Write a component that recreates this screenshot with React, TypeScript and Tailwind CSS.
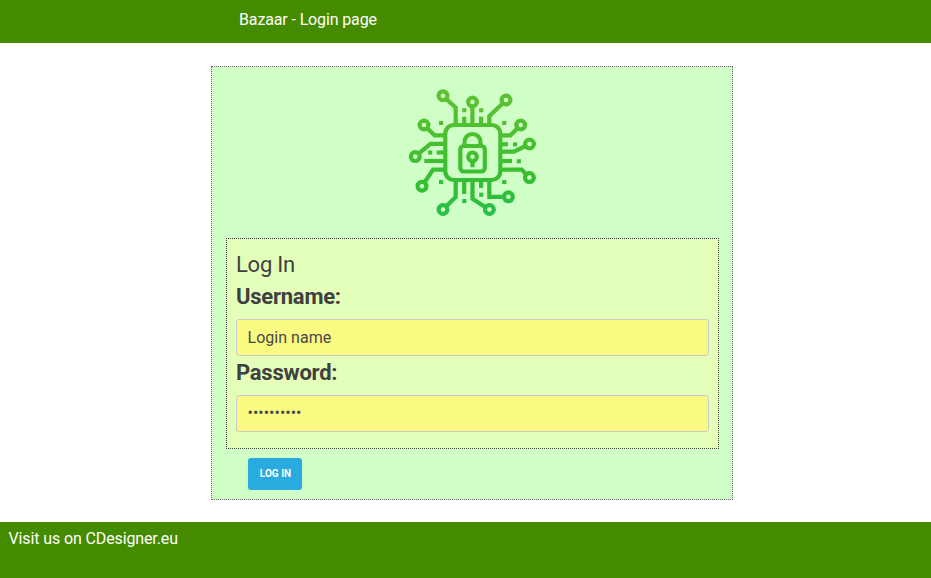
const nodes: [number, number][] = [
  [443, 95.7], [472.5, 102], [506, 100], [424, 125], [520.7, 125], [529.5, 144],
  [415.3, 156.6], [422, 186.2], [443, 209.5], [489.4, 209.5], [508.4, 196.8], [529.4, 177.6],
];

const dots: [number, number][] = [
  [462.3, 108.2], [479.2, 108.2], [439, 120.9], [502.2, 120.9], [513, 142.3], [428.2, 150.5],
  [516.8, 159.2], [439, 180], [502.2, 180], [462.3, 199], [479.2, 192.7],
];

const traces = [
  'M446.2 98.9L455.7 107.6V124',
  'M472.4 106V124',
  'M502.8 103.2L489.3 116.2V124',
  'M427.2 128.2L434.6 135.3H445',
  'M517.5 128.2L510.5 135.3H500',
  'M525.6 146L514 151.6H500',
  'M418.6 153.6L430.5 143.8H445',
  'M424.3 161H445',
  'M424.5 182.5L433 169.7H445',
  'M446.2 206.3L455.7 197V181',
  'M485.6 207.2L472.5 198.8V181',
  'M504 196.8H489.3V181',
  'M526.2 174.4L521.8 169.7H500',
  'M436.7 152.5H445',
  'M508 144.2H500',
  'M512 161H500',
  'M464.2 116.7V124',
  'M481.1 116.7V124',
  'M464.2 194V181',
  'M481.1 188V181',
];

function CircuitLock() {
  return (
    <svg className="block h-[142px] w-[145px]" viewBox="400 80 145 142" fill="none" stroke="url(#leaf)" strokeWidth="4.2">
      <defs>
        <linearGradient id="leaf" gradientUnits="userSpaceOnUse" x1="472" y1="88" x2="472" y2="217">
          <stop offset="0" stopColor="#62c132" />
          <stop offset="0.5" stopColor="#43bf30" />
          <stop offset="0.8" stopColor="#31be34" />
          <stop offset="1" stopColor="#2bbf50" />
        </linearGradient>
      </defs>
      {traces.map((d) => (
        <path key={d} d={d} />
      ))}
      {nodes.map(([x, y]) => (
        <circle key={`${x}-${y}`} cx={x} cy={y} r="4.4" />
      ))}
      {dots.map(([x, y]) => (
        <rect key={`${x}-${y}`} x={x} y={y} width="4.1" height="4.1" fill="url(#leaf)" stroke="none" />
      ))}
      <rect x="445.3" y="125" width="55" height="55" rx="8.5" />
      <rect x="460.3" y="146" width="24.5" height="25.5" rx="3.5" />
      <path d="M464.5 146V142A8 8 0 0 1 480.5 142V146" />
      <circle cx="472.5" cy="156.8" r="4.3" />
      <path d="M472.5 161V167.3" />
    </svg>
  );
}

const field =
  'block h-[37px] w-full rounded-[3px] border border-[#cccccc] bg-[#faf982] px-[10.5px] text-[#4a4a4a] outline-none';

export default function App() {
  return (
    <div className="flex h-[578px] w-full flex-col bg-white font-['Roboto',sans-serif] text-[#404040]">
      <header className="h-[43px] bg-[#458b00] pt-[8px] pl-[239px] text-[16px] leading-6 tracking-[-0.13px] text-white">
        Bazaar - Login page
      </header>
      <form className="mt-[23px] ml-[211px] h-[434px] w-[522px] border border-dotted border-[#696969] bg-[#cfffc7] px-[14px]">
        <div className="flex h-[171px] justify-center pt-[13px]">
          <CircuitLock />
        </div>
        <div className="h-[211px] w-[493px] border border-dotted border-[#404040] bg-[#e4ffb9] px-[9px] pt-[10px]">
          <h1 className="h-8 text-[22px] leading-8 font-normal tracking-[-0.25px]">Log In</h1>
          <label className="block h-[38px] text-[22px] leading-8 font-bold tracking-[-0.24px]" htmlFor="user">
            Username:
          </label>
          <input id="user" className={`${field} text-[16px] tracking-[0.03px]`} defaultValue="Login name" />
          <label className="block h-[39px] pt-px text-[22px] leading-8 font-bold tracking-[-0.24px]" htmlFor="pass">
            Password:
          </label>
          <input id="pass" type="password" className={`${field} text-[16px] pb-[3px]`} defaultValue="abcdefghij" />
        </div>
        <button
          type="button"
          className="mt-[9px] ml-[22px] block h-8 w-[54px] rounded-[3px] bg-[#29abe0] pl-px text-[10px] leading-8 font-bold text-white"
        >
          LOG IN
        </button>
      </form>
      <footer className="mt-[22px] h-[56px] bg-[#458b00] pt-[5px] pl-[8.5px] text-[16px] leading-6 tracking-[-0.12px] text-white">
        Visit us on CDesigner.eu
      </footer>
    </div>
  );
}
